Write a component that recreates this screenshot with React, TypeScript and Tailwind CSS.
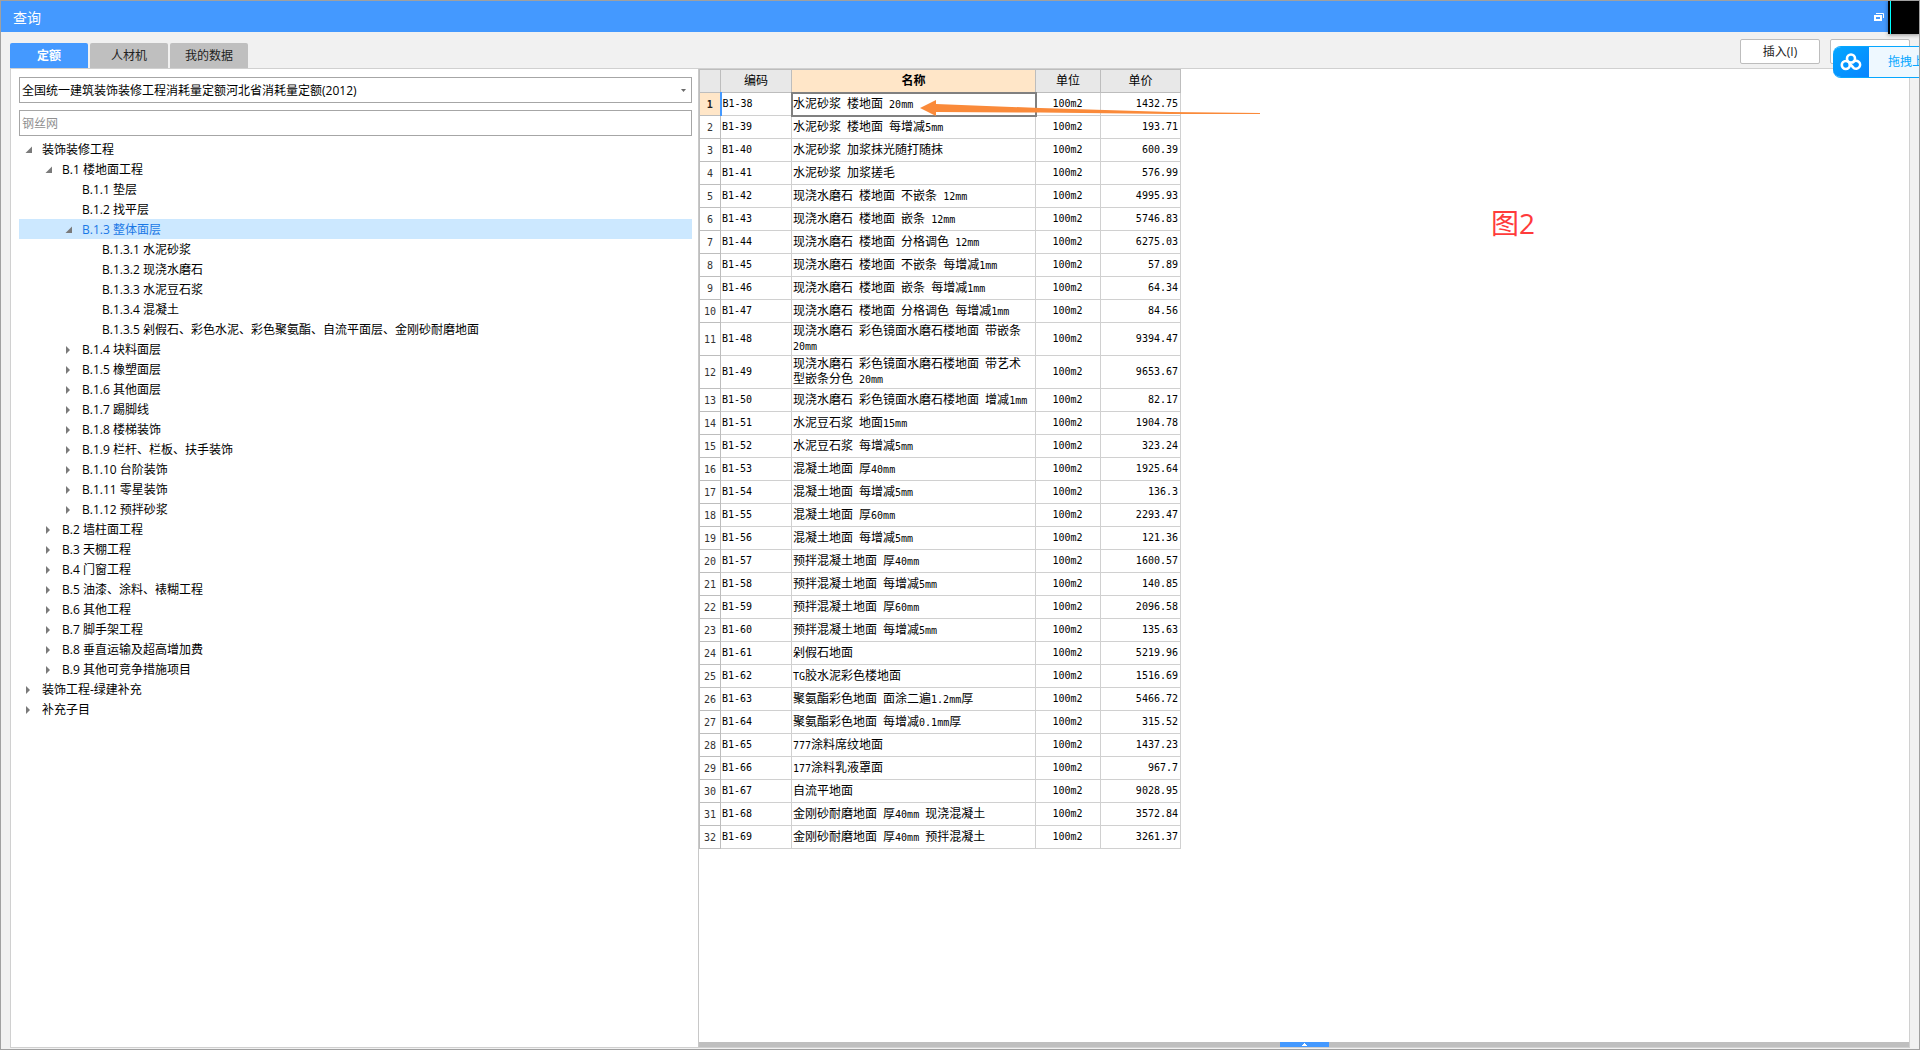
import { useState } from "react";

type TreeItem = { level: number; label: string; state?: "open" | "closed" };

const tree: TreeItem[] = [
  { level: 0, label: "装饰装修工程", state: "open" },
  { level: 1, label: "B.1 楼地面工程", state: "open" },
  { level: 2, label: "B.1.1 垫层" },
  { level: 2, label: "B.1.2 找平层" },
  { level: 2, label: "B.1.3 整体面层", state: "open" },
  { level: 3, label: "B.1.3.1 水泥砂浆" },
  { level: 3, label: "B.1.3.2 现浇水磨石" },
  { level: 3, label: "B.1.3.3 水泥豆石浆" },
  { level: 3, label: "B.1.3.4 混凝土" },
  { level: 3, label: "B.1.3.5 剁假石、彩色水泥、彩色聚氨酯、自流平面层、金刚砂耐磨地面" },
  { level: 2, label: "B.1.4 块料面层", state: "closed" },
  { level: 2, label: "B.1.5 橡塑面层", state: "closed" },
  { level: 2, label: "B.1.6 其他面层", state: "closed" },
  { level: 2, label: "B.1.7 踢脚线", state: "closed" },
  { level: 2, label: "B.1.8 楼梯装饰", state: "closed" },
  { level: 2, label: "B.1.9 栏杆、栏板、扶手装饰", state: "closed" },
  { level: 2, label: "B.1.10 台阶装饰", state: "closed" },
  { level: 2, label: "B.1.11 零星装饰", state: "closed" },
  { level: 2, label: "B.1.12 预拌砂浆", state: "closed" },
  { level: 1, label: "B.2 墙柱面工程", state: "closed" },
  { level: 1, label: "B.3 天棚工程", state: "closed" },
  { level: 1, label: "B.4 门窗工程", state: "closed" },
  { level: 1, label: "B.5 油漆、涂料、裱糊工程", state: "closed" },
  { level: 1, label: "B.6 其他工程", state: "closed" },
  { level: 1, label: "B.7 脚手架工程", state: "closed" },
  { level: 1, label: "B.8 垂直运输及超高增加费", state: "closed" },
  { level: 1, label: "B.9 其他可竞争措施项目", state: "closed" },
  { level: 0, label: "装饰工程-绿建补充", state: "closed" },
  { level: 0, label: "补充子目", state: "closed" },
];

const rows: [string, string, string][] = [
  ["B1-38", "水泥砂浆 楼地面 20mm", "1432.75"],
  ["B1-39", "水泥砂浆 楼地面 每增减5mm", "193.71"],
  ["B1-40", "水泥砂浆 加浆抹光随打随抹", "600.39"],
  ["B1-41", "水泥砂浆 加浆搓毛", "576.99"],
  ["B1-42", "现浇水磨石 楼地面 不嵌条 12mm", "4995.93"],
  ["B1-43", "现浇水磨石 楼地面 嵌条 12mm", "5746.83"],
  ["B1-44", "现浇水磨石 楼地面 分格调色 12mm", "6275.03"],
  ["B1-45", "现浇水磨石 楼地面 不嵌条 每增减1mm", "57.89"],
  ["B1-46", "现浇水磨石 楼地面 嵌条 每增减1mm", "64.34"],
  ["B1-47", "现浇水磨石 楼地面 分格调色 每增减1mm", "84.56"],
  ["B1-48", "现浇水磨石 彩色镜面水磨石楼地面 带嵌条 20mm", "9394.47"],
  ["B1-49", "现浇水磨石 彩色镜面水磨石楼地面 带艺术型嵌条分色 20mm", "9653.67"],
  ["B1-50", "现浇水磨石 彩色镜面水磨石楼地面 增减1mm", "82.17"],
  ["B1-51", "水泥豆石浆 地面15mm", "1904.78"],
  ["B1-52", "水泥豆石浆 每增减5mm", "323.24"],
  ["B1-53", "混凝土地面 厚40mm", "1925.64"],
  ["B1-54", "混凝土地面 每增减5mm", "136.3"],
  ["B1-55", "混凝土地面 厚60mm", "2293.47"],
  ["B1-56", "混凝土地面 每增减5mm", "121.36"],
  ["B1-57", "预拌混凝土地面 厚40mm", "1600.57"],
  ["B1-58", "预拌混凝土地面 每增减5mm", "140.85"],
  ["B1-59", "预拌混凝土地面 厚60mm", "2096.58"],
  ["B1-60", "预拌混凝土地面 每增减5mm", "135.63"],
  ["B1-61", "剁假石地面", "5219.96"],
  ["B1-62", "TG胶水泥彩色楼地面", "1516.69"],
  ["B1-63", "聚氨酯彩色地面 面涂二遍1.2mm厚", "5466.72"],
  ["B1-64", "聚氨酯彩色地面 每增减0.1mm厚", "315.52"],
  ["B1-65", "777涂料席纹地面", "1437.23"],
  ["B1-66", "177涂料乳液罩面", "967.7"],
  ["B1-67", "自流平地面", "9028.95"],
  ["B1-68", "金刚砂耐磨地面 厚40mm 现浇混凝土", "3572.84"],
  ["B1-69", "金刚砂耐磨地面 厚40mm 预拌混凝土", "3261.37"],
];

const indent = ["pl-1", "pl-6", "pl-11", "pl-16"];
const tabs = ["定额", "人材机", "我的数据"];

// half-width characters take half the width of a Chinese one
function Mixed({ text }: { text: string }) {
  return (
    <>
      {text.split(/([\x20-\x7e]+)/).map((part, i) =>
        i % 2 ? <span key={i} className="text-[10px]">{part}</span> : part
      )}
    </>
  );
}

function Toggle({ state }: { state?: string }) {
  return (
    <svg viewBox="0 0 12 12" className="size-3 shrink-0" fill="#7a7a7a" aria-hidden="true">
      {state === "open" && <path d="M9 2.500v6.500H2.500z" />}
      {state === "closed" && <path d="M3 2v8L7 6z" />}
    </svg>
  );
}

function Sidebar() {
  const [query, setQuery] = useState("");
  const [selected, setSelected] = useState(4);

  return (
    <aside className="w-[36.25%] shrink-0 border-r border-[#c8c8c8] pt-2 pl-2 pr-[6px]">
      <div className="relative">
        <select aria-label="定额库" className="block h-[26px] w-full appearance-none border border-[#a6a6a6] bg-white pt-px pl-[2px] text-xs">
          <option>全国统一建筑装饰装修工程消耗量定额河北省消耗量定额(2012)</option>
        </select>
        <svg viewBox="0 0 5 3" className="pointer-events-none absolute top-3 right-[6px] h-[3px] w-[5px]" fill="#6b6b6b">
          <path d="M0 0h5L2.5 3z" />
        </svg>
      </div>
      <input value={query} onChange={e => setQuery(e.target.value)} aria-label="搜索" placeholder="钢丝网"
        className="mt-[7px] block h-[26px] w-full border border-[#a6a6a6] px-[2px] text-xs placeholder:text-[#909090]" />
      <ul className="mt-[3px]" role="tree">
        {tree.map((item, i) => (
          <li key={item.label} role="treeitem" aria-selected={i === selected}>
            <button onClick={() => setSelected(i)}
              className={`flex h-5 w-full items-center gap-[7px] pt-[2px] text-left text-xs ${indent[item.level]} ${i === selected ? "bg-[#cce8ff] text-[#1a78e6]" : ""}`}>
              <Toggle state={item.state} />
              {item.label}
            </button>
          </li>
        ))}
      </ul>
    </aside>
  );
}

function PriceTable() {
  const head = "border border-[#bdbdbd] bg-[#e8e8e8] p-0 font-normal";
  const cell = "border border-[#d0d0d0] py-px pl-px pr-[2px]";
  return (
    <div className="relative w-fit">
      <table className="w-[482px] table-fixed border-collapse font-['DejaVu_Sans_Mono','Noto_Sans_CJK_SC',monospace] text-xs leading-[14px]">
        <colgroup>
          <col className="w-[21px]" />
          <col className="w-[71px]" />
          <col className="w-[244px]" />
          <col className="w-[65px]" />
          <col className="w-[80px]" />
        </colgroup>
        <thead>
          <tr className="h-[23px]">
            <th className={head} aria-label="序号" />
            <th className={head}>编码</th>
            <th className="border border-[#bdbdbd] border-b-[#4499ff] bg-[#ffe6c8] p-0 font-bold">名称</th>
            <th className={head}>单位</th>
            <th className={head}>单价</th>
          </tr>
        </thead>
        <tbody>
          {rows.map(([code, name, price], i) => (
            <tr key={code} className="h-[23px]">
              <th className={i === 0
                ? "border border-[#bdbdbd] border-r-2 border-r-[#4499ff] bg-[#ffe6c8] p-0 pt-[2px] text-[10px] font-bold text-[#222]"
                : "border border-[#bdbdbd] p-0 pt-[2px] text-[10px] font-normal text-[#333]"}>
                {i + 1}
              </th>
              <td className={`${cell} text-[10px]`}>{code}</td>
              <td className={i === 0 ? `${cell} outline-2 -outline-offset-1 outline-[#808080]` : cell}>
                <Mixed text={name} />
              </td>
              <td className={`${cell} text-center text-[10px]`}>100m2</td>
              <td className={`${cell} text-right text-[10px]`}>{price}</td>
            </tr>
          ))}
        </tbody>
      </table>
      <svg viewBox="0 0 340 18" className="absolute top-[30px] left-[221px] h-[18px] w-[340px]" fill="#fa8a3a" aria-hidden="true">
        <path d="M0 9L16 1V5L120 9L250 13L340 14V15L250 15L120 13.500L16 13V17z" />
      </svg>
    </div>
  );
}

export default function App() {
  const [tab, setTab] = useState(tabs[0]);

  return (
    <div className="relative flex min-h-screen flex-col overflow-hidden border border-[#a0a0a0] bg-[#f1f1f1] font-['Open_Sans','Noto_Sans_CJK_SC',sans-serif] text-xs text-black">
      <header className="flex h-[31px] items-center justify-between bg-[#4499ff] pl-3 pr-[35px] text-white">
        <h1 className="pt-[2px] text-sm">查询</h1>
        <button aria-label="还原">
          <svg viewBox="0 0 10 8" className="h-2 w-[10px]" fill="none" stroke="#fff" aria-hidden="true">
            <path d="M2 .5h7.500V5" />
            <path d="M1 3h6v4H1z" strokeWidth="2" />
          </svg>
        </button>
      </header>

      <div className="flex h-9 items-end justify-between pl-[9px] pr-[9px]">
        <nav className="flex gap-[2px]">
          {tabs.map(t => (
            <button key={t} onClick={() => setTab(t)}
              className={t === tab
                ? "h-[25px] w-[78px] rounded-t-xs bg-[#4499ff] font-bold text-white"
                : "h-[25px] w-[78px] rounded-t-xs bg-[#bfbfbf] text-[#222]"}>
              {t}
            </button>
          ))}
        </nav>
        <div className="flex gap-[10px] pb-1">
          <button className="h-[25px] w-20 rounded-xs border border-[#bdbdbd] bg-white text-[#222]">插入(I)</button>
          <button aria-label="替换" className="h-[25px] w-20 rounded-xs border border-[#bdbdbd] bg-white" />
        </div>
      </div>

      <main className="mx-[9px] mb-px flex flex-1 border border-[#d0d0d0] bg-white">
        <Sidebar />
        <section className="flex min-w-0 flex-1 flex-col justify-between">
          <div className="flex items-start">
            <PriceTable />
            <p className="mt-[134px] ml-[310px] text-[28px] leading-10 text-[#ff3b3b]">图2</p>
          </div>
          <div className="flex h-[5px] justify-center bg-[#bfbfbf]">
            <button aria-label="展开" className="flex w-[49px] items-center justify-center bg-[#4499ff]">
              <svg viewBox="0 0 5 3" className="h-[3px] w-[5px]" fill="#fff"><path d="M0 3h5V2H4V1H3V0H2v1H1v1H0z" /></svg>
            </button>
          </div>
        </section>
      </main>

      <div className="absolute -top-px -right-px flex h-[34px] w-8 bg-black pl-[2px] shadow-[0_1px_4px_#0006]">
        <div className="w-px bg-[#00ffff]" />
      </div>
      <a href="#upload" className="absolute top-[45px] -right-px flex h-8 w-[87px] overflow-hidden rounded-l-lg border-y border-[#06a7ff] bg-[#eef8ff] text-xs text-[#06a7ff]">
        <span className="flex w-9 shrink-0 items-center justify-center bg-linear-to-br from-[#06a7ff] to-[#0a84ff]">
          <svg viewBox="0 0 22 18" className="h-[18px] w-[22px]" fill="none" stroke="#fff" strokeWidth="2.600" strokeLinecap="round" aria-hidden="true">
            <circle cx="11" cy="5.500" r="4" />
            <circle cx="5.800" cy="12" r="4" />
            <path d="M13 9.200A4 4 0 1 1 13.600 14.900L10 11" />
          </svg>
        </span>
        <span className="pl-[19px] leading-[30px] whitespace-nowrap">拖拽上传</span>
      </a>
    </div>
  );
}
